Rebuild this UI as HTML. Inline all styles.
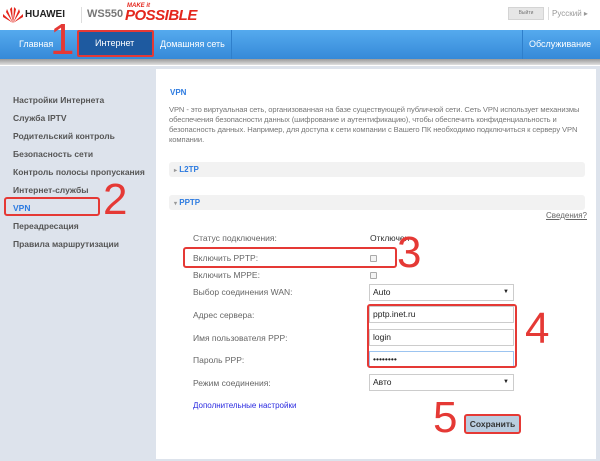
<!DOCTYPE html>
<html><head><meta charset="utf-8"><style>
*{margin:0;padding:0;box-sizing:border-box}
body{width:600px;height:461px;overflow:hidden;background:#fff;font-family:"Liberation Sans",sans-serif;position:relative}
.a{position:absolute;white-space:nowrap}
.side{color:#555;font-weight:bold;font-size:8.5px}
.lab{color:#666;font-size:8.5px}
.p{color:#777;font-size:7.6px}
.red{border:2px solid #e53935;border-radius:3px;position:absolute}
.num{position:absolute;color:#e53935;font-size:44px;font-family:"Liberation Sans",sans-serif;line-height:1}
.inp{position:absolute;border:1px solid #ccc;background:#fff;font-size:8.5px;color:#222;padding-left:3px;line-height:15px;height:17px}
</style></head><body>
<svg class="a" style="left:2px;top:6px" width="22" height="18" viewBox="0 0 22 18"><g fill="#e4261c"><path d="M11 17 L8 3 L10 1 Z"/><path d="M11 17 L14 3 L12 1 Z"/><path d="M11 17 L4 6 L5 3 Z"/><path d="M11 17 L18 6 L17 3 Z"/><path d="M11 17 L1 11 L1 8 Z"/><path d="M11 17 L21 11 L21 8 Z"/></g></svg>
<div class="a" style="left:25px;top:9px;font-size:10px;font-weight:bold;color:#222">HUAWEI</div>
<div class="a" style="left:81px;top:7px;width:1px;height:16px;background:#ddd"></div>
<div class="a" style="left:87px;top:8px;font-size:11px;font-weight:bold;color:#777">WS550</div>
<div class="a" style="left:127px;top:3px;font-size:6px;font-weight:bold;color:#e4261c;font-style:italic">MAKE it</div>
<div class="a" style="left:125px;top:7px;font-size:15px;font-weight:900;color:#e4261c;font-style:italic;letter-spacing:-0.5px">POSSIBLE</div>
<div class="a" style="left:508px;top:7px;width:36px;height:13px;background:#e6e6e6;border:1px solid #d4d4d4;font-size:5px;color:#777;text-align:center;line-height:11px">Выйти</div>
<div class="a" style="left:548px;top:7px;width:1px;height:13px;background:#ddd"></div>
<div class="a" style="left:552px;top:9px;font-size:8px;color:#999">Русский ▸</div>
<div class="a" style="left:0;top:30px;width:600px;height:29px;background:linear-gradient(#55aaee,#3589d8)"></div>
<div class="a" style="left:0;top:59px;width:600px;height:6px;background:linear-gradient(#9a9a9a,#e0e0e0)"></div>
<div class="a" style="left:19px;top:39px;font-size:9px;color:#fff">Главная</div>
<div class="a" style="left:77px;top:30px;width:77px;height:27px;background:#1e5aa0;border:2px solid #e53935;border-radius:2px"></div>
<div class="a" style="left:95px;top:38px;font-size:9px;color:#fff">Интернет</div>
<div class="a" style="left:160px;top:39px;font-size:9px;color:#fff">Домашняя сеть</div>
<div class="a" style="left:231px;top:30px;width:1px;height:29px;background:#2f7fcb"></div>
<div class="a" style="left:522px;top:30px;width:1px;height:29px;background:#2f7fcb"></div>
<div class="a" style="left:529px;top:39px;font-size:9px;color:#fff">Обслуживание</div>
<div class="a" style="left:0;top:66px;width:600px;height:395px;background:#dde3ec"></div>
<div class="a" style="left:156px;top:69px;width:440px;height:390px;background:#fff"></div>
<div class="a side" style="left:13px;top:95px">Настройки Интернета</div>
<div class="a side" style="left:13px;top:113px">Служба IPTV</div>
<div class="a side" style="left:13px;top:131px">Родительский контроль</div>
<div class="a side" style="left:13px;top:149px">Безопасность сети</div>
<div class="a side" style="left:13px;top:167px">Контроль полосы пропускания</div>
<div class="a side" style="left:13px;top:185px">Интернет-службы</div>
<div class="red" style="left:4px;top:197px;width:96px;height:19px"></div>
<div class="a side" style="left:13px;top:203px;color:#2d7be0">VPN</div>
<div class="a side" style="left:13px;top:221px">Переадресация</div>
<div class="a side" style="left:13px;top:239px">Правила маршрутизации</div>
<div class="num" style="left:50px;top:18px">1</div>
<div class="num" style="left:103px;top:178px">2</div>
<div class="a" style="left:170px;top:88px;font-size:8px;font-weight:bold;color:#2d7be0">VPN</div>
<div class="a p" style="left:169px;top:105px;line-height:10px;letter-spacing:-0.1px">VPN - это виртуальная сеть, организованная на базе существующей публичной сети. Сеть VPN использует механизмы<br>обеспечения безопасности данных (шифрование и аутентификацию), чтобы обеспечить конфиденциальность и<br>безопасность данных. Например, для доступа к сети компании с Вашего ПК необходимо подключиться к серверу VPN<br>компании.</div>
<div class="a" style="left:169px;top:162px;width:416px;height:15px;background:#f2f2f2;border-radius:3px"></div>
<div class="a" style="left:174px;top:165px;font-size:8px;font-weight:bold;color:#2d7be0"><span style="color:#999;font-size:6px">▸</span> L2TP</div>
<div class="a" style="left:169px;top:195px;width:416px;height:15px;background:#f2f2f2;border-radius:3px"></div>
<div class="a" style="left:174px;top:198px;font-size:8px;font-weight:bold;color:#2d7be0"><span style="color:#999;font-size:6px">▾</span> PPTP</div>
<div class="a" style="left:546px;top:211px;font-size:8px;color:#666;text-decoration:underline">Сведения?</div>
<div class="a lab" style="left:193px;top:233px">Статус подключения:</div>
<div class="a" style="left:370px;top:233px;font-size:8.5px;color:#333">Отключен</div>
<div class="red" style="left:183px;top:247px;width:214px;height:21px"></div>
<div class="a lab" style="left:193px;top:253px">Включить PPTP:</div>
<div class="a" style="left:370px;top:255px;width:7px;height:7px;border:1px solid #aaa;border-radius:1px;background:#f4f4f4"></div>
<div class="a lab" style="left:193px;top:270px">Включить MPPE:</div>
<div class="a" style="left:370px;top:272px;width:7px;height:7px;border:1px solid #aaa;border-radius:1px;background:#f4f4f4"></div>
<div class="a lab" style="left:193px;top:287px">Выбор соединения WAN:</div>
<div class="inp" style="left:369px;top:284px;width:145px">Auto<span style="position:absolute;right:4px;font-size:6px">▼</span></div>
<div class="a lab" style="left:193px;top:310px">Адрес сервера:</div>
<div class="inp" style="left:369px;top:306px;width:145px">pptp.inet.ru</div>
<div class="a lab" style="left:193px;top:333px">Имя пользователя PPP:</div>
<div class="inp" style="left:369px;top:329px;width:145px">login</div>
<div class="a lab" style="left:193px;top:355px">Пароль PPP:</div>
<div class="inp" style="left:369px;top:351px;width:145px;border-color:#9cc4f0">••••••••</div>
<div class="red" style="left:367px;top:304px;width:150px;height:64px"></div>
<div class="num" style="left:525px;top:307px">4</div>
<div class="num" style="left:397px;top:231px">3</div>
<div class="a lab" style="left:193px;top:378px">Режим соединения:</div>
<div class="inp" style="left:369px;top:374px;width:145px">Авто<span style="position:absolute;right:4px;font-size:6px">▼</span></div>
<div class="a" style="left:193px;top:401px;font-size:8px;color:#2a2ae0">Дополнительные настройки</div>
<div class="num" style="left:433px;top:396px">5</div>
<div class="a" style="left:464px;top:414px;width:57px;height:20px;border:2px solid #e53935;border-radius:3px;background:#b9cde0;font-size:8.5px;font-weight:bold;color:#333;text-align:center;line-height:16px">Сохранить</div>
</body></html>
